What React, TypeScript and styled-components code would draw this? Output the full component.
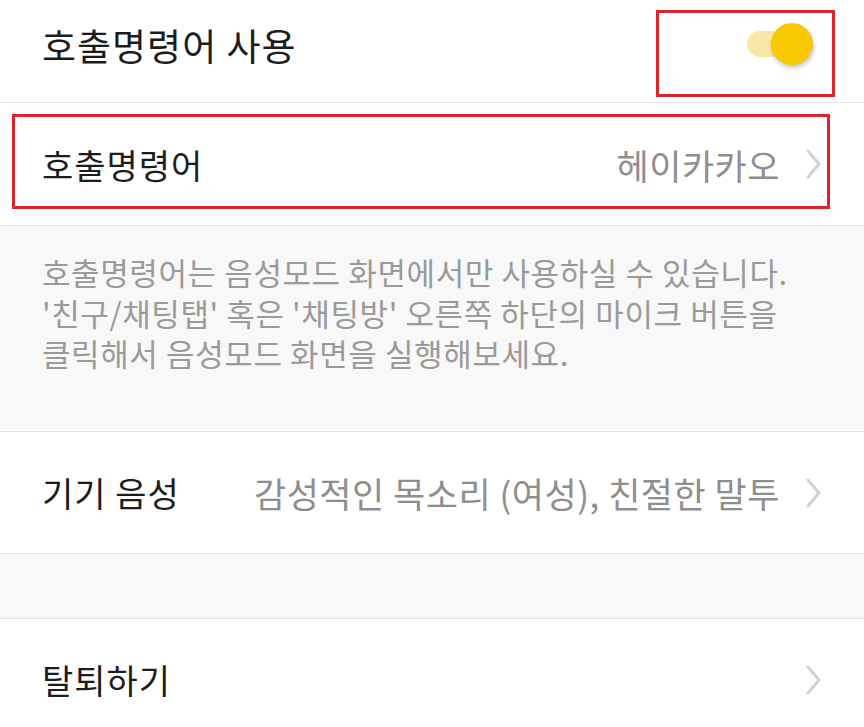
import React from 'react';
import styled, { createGlobalStyle } from 'styled-components';

const GlobalStyle = createGlobalStyle`
  html, body {
    margin: 0;
    padding: 0;
    background: #ffffff;
    font-family: "Noto Sans CJK KR", "Noto Sans", sans-serif;
  }
`;

const Page = styled.div`
  width: 864px;
  height: 727px;
  overflow: hidden;
  background: #f8f8f8;
`;

const Row = styled.div<{ $height: number; $lift?: number }>`
  position: relative;
  display: flex;
  align-items: center;
  height: ${(p) => p.$height}px;
  padding: 0 42px ${(p) => p.$lift ?? 0}px;
  background: #ffffff;
  border-bottom: 1px solid #e4e4e4;
  box-sizing: border-box;
`;

const Label = styled.span<{ $size?: number }>`
  flex-shrink: 0;
  font-size: ${(p) => p.$size ?? 34}px;
  color: #1c1c1c;
  letter-spacing: 1px;
`;

const Value = styled.span`
  flex: 1;
  text-align: right;
  font-size: 35px;
  color: #8e8e8e;
  letter-spacing: 0.5px;
  white-space: nowrap;
`;

const Chevron = styled.svg`
  flex-shrink: 0;
  width: 16px;
  height: 30px;
  margin-left: 26px;
  margin-right: 0;
`;

const Notice = styled.div`
  height: 206px;
  padding: 26px 42px 0;
  box-sizing: border-box;
  background: #f8f8f8;
  border-bottom: 1px solid #e4e4e4;
  font-size: 31px;
  line-height: 40.5px;
  color: #9a9a9a;
  letter-spacing: 0.6px;
  white-space: nowrap;
`;

const Spacer = styled.div`
  height: 64px;
  background: #f8f8f8;
  border-bottom: 1px solid #e4e4e4;
`;

const Toggle = styled.div`
  position: relative;
  margin-left: auto;
  margin-right: 9px;
  margin-bottom: 3px;
  width: 66px;
  height: 42px;
`;

const Track = styled.div`
  position: absolute;
  left: 0;
  top: 8px;
  width: 48px;
  height: 26px;
  border-radius: 13px;
  background: #f8e6a6;
`;

const Knob = styled.div`
  position: absolute;
  right: 0;
  top: 0;
  width: 42px;
  height: 42px;
  border-radius: 50%;
  background: #f8c800;
  box-shadow: 1px 3px 4px rgba(0, 0, 0, 0.22);
`;

const Annotation = styled.div<{ $top: number; $left: number; $width: number; $height: number }>`
  position: absolute;
  top: ${(p) => p.$top}px;
  left: ${(p) => p.$left}px;
  width: ${(p) => p.$width}px;
  height: ${(p) => p.$height}px;
  border: 3px solid #e0222b;
  box-sizing: border-box;
  pointer-events: none;
`;

const Arrow = () => (
  <Chevron viewBox="0 0 16 30">
    <polyline points="2,2 13,15 2,28" fill="none" stroke="#d2d2d2" strokeWidth="3" strokeLinecap="round" strokeLinejoin="round" />
  </Chevron>
);

export default function App() {
  return (
    <Page>
      <GlobalStyle />
      <Row $height={103} $lift={12}>
        <Label $size={37}>호출명령어 사용</Label>
        <Toggle>
          <Track />
          <Knob />
        </Toggle>
        <Annotation $top={10} $left={656} $width={179} $height={87} />
      </Row>
      <Row $height={123}>
        <Label>호출명령어</Label>
        <Value>헤이카카오</Value>
        <Arrow />
        <Annotation $top={11} $left={12} $width={818} $height={95} />
      </Row>
      <Notice>
        호출명령어는 음성모드 화면에서만 사용하실 수 있습니다.
        <br />
        '친구/채팅탭' 혹은 '채팅방' 오른쪽 하단의 마이크 버튼을
        <br />
        클릭해서 음성모드 화면을 실행해보세요.
      </Notice>
      <Row $height={122}>
        <Label>기기 음성</Label>
        <Value>감성적인 목소리 (여성), 친절한 말투</Value>
        <Arrow />
      </Row>
      <Spacer />
      <Row $height={122}>
        <Label>탈퇴하기</Label>
        <Value />
        <Arrow />
      </Row>
    </Page>
  );
}
